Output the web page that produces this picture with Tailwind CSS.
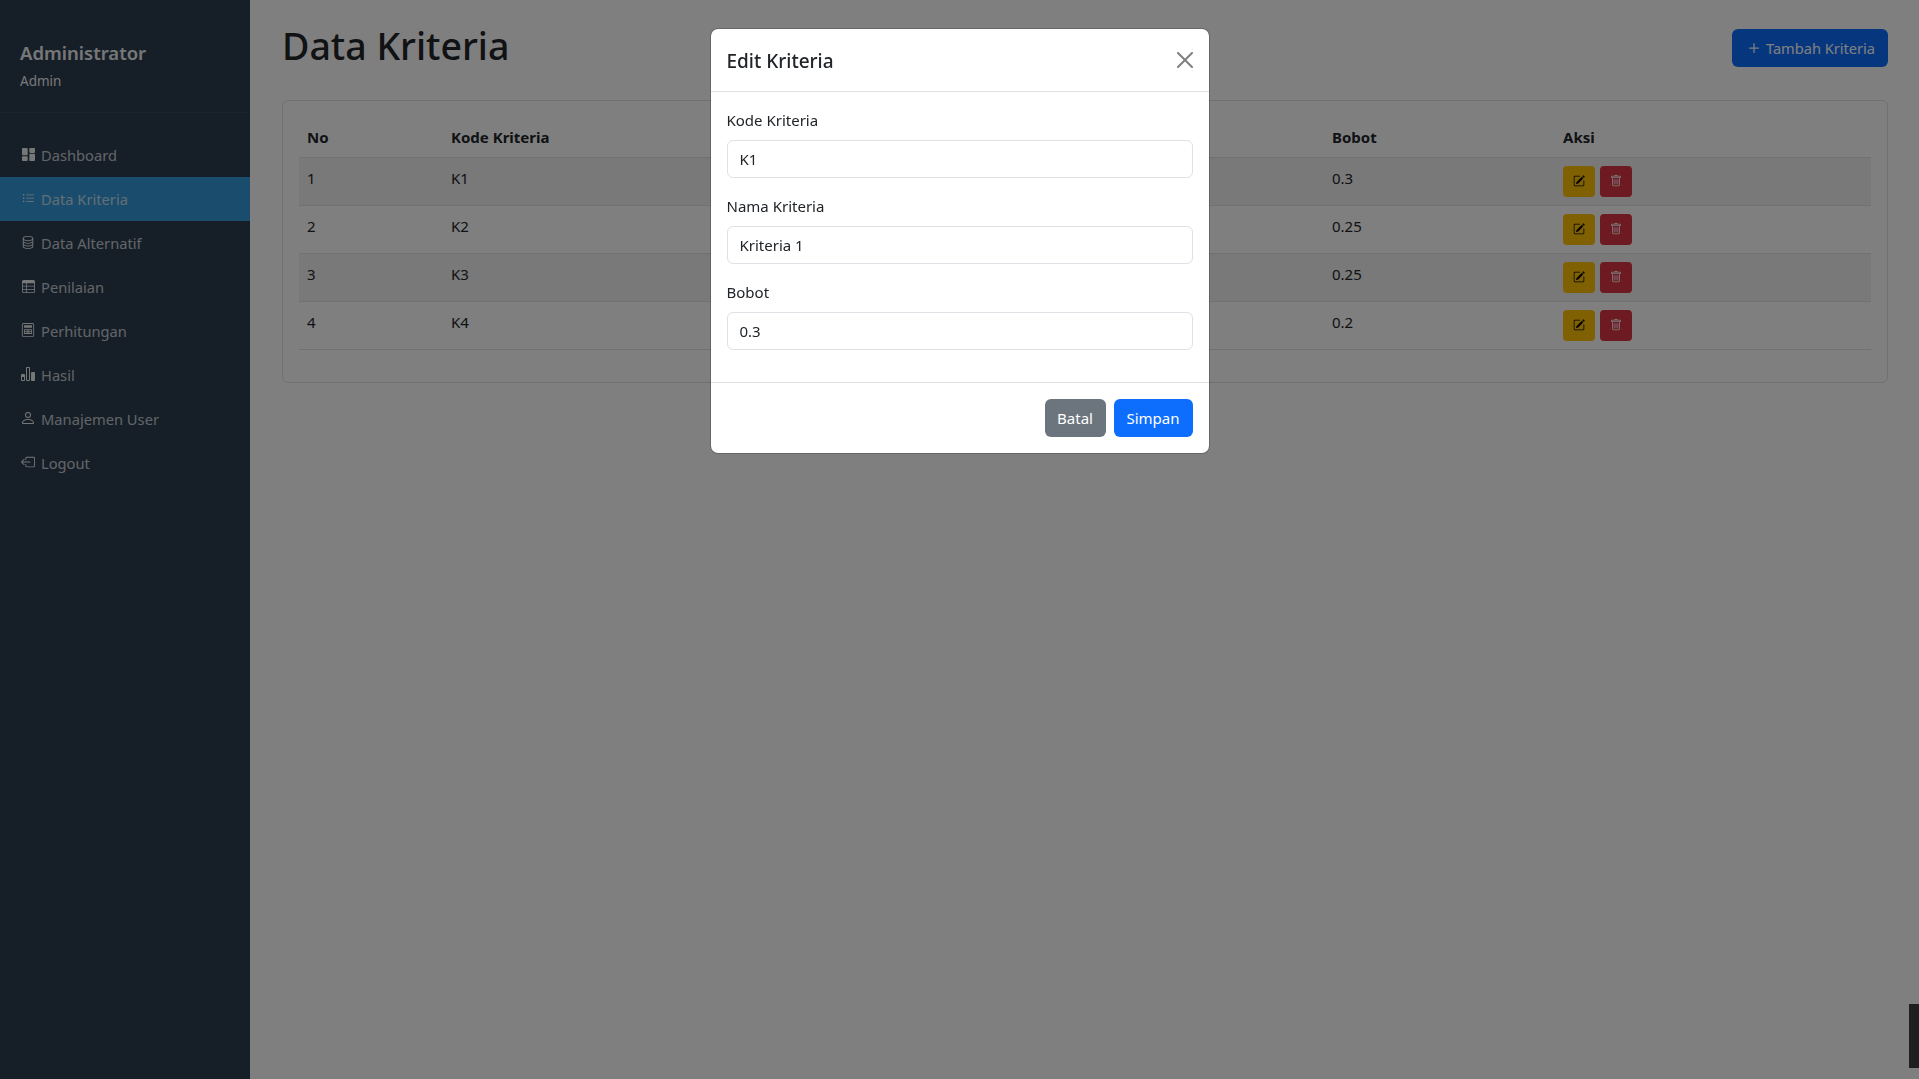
<!DOCTYPE html>
<html>
  <head>
    <title>Data Kriteria</title>
    <script src="https://cdn.jsdelivr.net/npm/@tailwindcss/browser@4"></script>
  </head>
  <body class="font-['Noto_Sans',sans-serif] text-[#212529] bg-white">
    <div class="flex h-screen overflow-hidden">
      <!-- sidebar -->
      <aside class="w-[250px] shrink-0 bg-[#2c3e50] text-[#ecf0f1]">
        <div class="pt-[41px] pl-[20px] border-b border-white/5 h-[113px]">
          <div class="text-[18.5px] leading-[24px] font-semibold">Administrator</div>
          <div class="text-[13.5px] leading-[21px] mt-[6px]">Admin</div>
        </div>
        <nav class="mt-[20px] text-[14.7px] text-[#ecf0f1]/80">
          <a class="flex items-center h-[44px] pl-[22px] gap-[6px]">
            <svg class="w-[13px] h-[13px] -mt-[2px] text-[#ecf0f1]" viewBox="0 0 16 16" fill="currentColor"><path d="M0 1a1 1 0 0 1 1-1h5a1 1 0 0 1 1 1v7a1 1 0 0 1-1 1H1a1 1 0 0 1-1-1V1zm9 0a1 1 0 0 1 1-1h5a1 1 0 0 1 1 1v4a1 1 0 0 1-1 1h-5a1 1 0 0 1-1-1V1zm0 7a1 1 0 0 1 1-1h5a1 1 0 0 1 1 1v7a1 1 0 0 1-1 1h-5a1 1 0 0 1-1-1V8zm-9 3a1 1 0 0 1 1-1h5a1 1 0 0 1 1 1v4a1 1 0 0 1-1 1H1a1 1 0 0 1-1-1v-4z"/></svg>
            Dashboard
          </a>
          <a class="flex items-center h-[44px] pl-[22px] gap-[6px] bg-[#3498db]">
            <svg class="w-[13px] h-[13px] -mt-[2px] text-[#ecf0f1]" viewBox="0 0 16 16" fill="currentColor"><path d="M5 11.5a.5.5 0 0 1 .5-.5h9a.5.5 0 0 1 0 1h-9a.5.5 0 0 1-.5-.5zm0-4a.5.5 0 0 1 .5-.5h9a.5.5 0 0 1 0 1h-9a.5.5 0 0 1-.5-.5zm0-4a.5.5 0 0 1 .5-.5h9a.5.5 0 0 1 0 1h-9a.5.5 0 0 1-.5-.5zm-3 1a1 1 0 1 0 0-2 1 1 0 0 0 0 2zm0 4a1 1 0 1 0 0-2 1 1 0 0 0 0 2zm0 4a1 1 0 1 0 0-2 1 1 0 0 0 0 2z"/></svg>
            Data Kriteria
          </a>
          <a class="flex items-center h-[44px] pl-[21px] gap-[6px]">
            <svg class="w-[14px] h-[14px] -mt-[2px] text-[#ecf0f1]" viewBox="0 0 16 16" fill="currentColor"><path d="M4.318 2.687C5.234 2.271 6.536 2 8 2s2.766.27 3.682.687C12.644 3.125 13 3.627 13 4c0 .374-.356.875-1.318 1.313C10.766 5.729 9.464 6 8 6s-2.766-.27-3.682-.687C3.356 4.875 3 4.373 3 4c0-.374.356-.875 1.318-1.313ZM13 5.698V7c0 .374-.356.875-1.318 1.313C10.766 8.729 9.464 9 8 9s-2.766-.27-3.682-.687C3.356 7.875 3 7.373 3 7V5.698c.271.202.58.378.904.525C4.978 6.711 6.427 7 8 7s3.022-.289 4.096-.777A4.92 4.92 0 0 0 13 5.698ZM14 4c0-1.007-.875-1.755-1.904-2.223C11.022 1.289 9.573 1 8 1s-3.022.289-4.096.777C2.875 2.245 2 2.993 2 4v9c0 1.007.875 1.755 1.904 2.223C4.978 15.71 6.427 16 8 16s3.022-.289 4.096-.777C13.125 14.755 14 14.007 14 13V4Zm-1 4.698V10c0 .374-.356.875-1.318 1.313C10.766 11.729 9.464 12 8 12s-2.766-.27-3.682-.687C3.356 10.875 3 10.373 3 10V8.698c.271.202.58.378.904.525C4.978 9.71 6.427 10 8 10s3.022-.289 4.096-.777A4.92 4.92 0 0 0 13 8.698Zm0 3V13c0 .374-.356.875-1.318 1.313C10.766 14.729 9.464 15 8 15s-2.766-.27-3.682-.687C3.356 13.875 3 13.373 3 13v-1.302c.271.202.58.378.904.525C4.978 12.71 6.427 13 8 13s3.022-.289 4.096-.777c.324-.147.633-.323.904-.525Z"/></svg>
            Data Alternatif
          </a>
          <a class="flex items-center h-[44px] pl-[22px] gap-[6px]">
            <svg class="w-[13px] h-[13px] -mt-[2px] text-[#ecf0f1]" viewBox="0 0 16 16" fill="currentColor"><path d="M0 2a2 2 0 0 1 2-2h12a2 2 0 0 1 2 2v12a2 2 0 0 1-2 2H2a2 2 0 0 1-2-2V2zm15 2h-9v3h9V4zm0 4h-9v3h9V8zm0 4h-9v3h8a1 1 0 0 0 1-1v-2zM5 15v-3H1v2a1 1 0 0 0 1 1h3zm-4-4h4V8H1v3zm0-4h4V4H1v3z"/></svg>
            Penilaian
          </a>
          <a class="flex items-center h-[44px] pl-[21px] gap-[6px]">
            <svg class="w-[14px] h-[14px] -mt-[2px] text-[#ecf0f1]" viewBox="0 0 16 16" fill="currentColor"><path d="M1 2a2 2 0 0 1 2-2h10a2 2 0 0 1 2 2v12a2 2 0 0 1-2 2H3a2 2 0 0 1-2-2V2zm2-1a1 1 0 0 0-1 1v12a1 1 0 0 0 1 1h10a1 1 0 0 0 1-1V2a1 1 0 0 0-1-1H3z"/><path d="M3.5 2.5h9v3h-9zM3.5 7h9v5.5h-9V7zm1 1v1h2V8h-2zm3 0v1h1V8h-1zm2 0v1h2V8h-2zm-5 2v1.500h2V10h-2zm3 0v1.500h1V10h-1zm2 0v1.500h2V10h-2z" fill-rule="evenodd"/></svg>
            Perhitungan
          </a>
          <a class="flex items-center h-[44px] pl-[20px] gap-[5px]">
            <svg class="w-[16px] h-[16px] -mt-[2px] text-[#ecf0f1]" viewBox="0 0 16 16" fill="currentColor"><path d="M4 11H2v3h2v-3zm5-9H7v12h2V2zm5 5h-2v7h2V7zM12 6a1 1 0 0 0-1 1v7a1 1 0 0 0 1 1h2a1 1 0 0 0 1-1V7a1 1 0 0 0-1-1h-2zM6 2a1 1 0 0 1 1-1h2a1 1 0 0 1 1 1v12a1 1 0 0 1-1 1H7a1 1 0 0 1-1-1V2zm-5 7a1 1 0 0 1 1-1h2a1 1 0 0 1 1 1v5a1 1 0 0 1-1 1H2a1 1 0 0 1-1-1V9z"/></svg>
            Hasil
          </a>
          <a class="flex items-center h-[44px] pl-[20px] gap-[5px]">
            <svg class="w-[16px] h-[16px] -mt-[2px] text-[#ecf0f1]" viewBox="0 0 16 16" fill="currentColor"><path d="M8 8a3 3 0 1 0 0-6 3 3 0 0 0 0 6zm2-3a2 2 0 1 1-4 0 2 2 0 0 1 4 0zm4 8c0 1-1 1-1 1H3s-1 0-1-1 1-4 6-4 6 3 6 4zm-1-.004c-.001-.246-.154-.986-.832-1.664C11.516 10.68 10.289 10 8 10c-2.29 0-3.516.68-4.168 1.332-.678.678-.83 1.418-.832 1.664h10z"/></svg>
            Manajemen User
          </a>
          <a class="flex items-center h-[44px] pl-[21px] gap-[6px]">
            <svg class="w-[14px] h-[14px] -mt-[2px] text-[#ecf0f1]" viewBox="0 0 16 16" fill="currentColor"><path d="M6 12.5a.5.5 0 0 0 .5.5h8a.5.5 0 0 0 .5-.5v-9a.5.5 0 0 0-.5-.5h-8a.5.5 0 0 0-.5.5v2a.5.5 0 0 1-1 0v-2A1.5 1.5 0 0 1 6.5 2h8A1.5 1.5 0 0 1 16 3.5v9a1.5 1.5 0 0 1-1.5 1.5h-8A1.5 1.5 0 0 1 5 12.5v-2a.5.5 0 0 1 1 0v2z"/><path d="M.146 8.354a.5.5 0 0 1 0-.708l3-3a.5.5 0 1 1 .708.708L1.707 7.5H10.5a.5.5 0 0 1 0 1H1.707l2.147 2.146a.5.5 0 0 1-.708.708l-3-3z"/></svg>
            Logout
          </a>
        </nav>
      </aside>

      <!-- content -->
      <main class="flex-1 pt-[24px] pl-[32px] pr-[31px]">
        <div class="flex items-center justify-between h-[48px] mb-[28px]">
          <h1 class="text-[37.5px] font-medium leading-[46px] -mt-[4px]">Data Kriteria</h1>
          <button class="flex items-center gap-[2px] h-[38px] pl-[12px] pr-[13px] pt-[1px] bg-[#0d6efd] text-white text-[14.6px] rounded-[6px]">
            <svg class="w-[20px] h-[20px] -mt-[2px]" viewBox="0 0 16 16" fill="currentColor"><path d="M8 4a.5.5 0 0 1 .5.5v3h3a.5.5 0 0 1 0 1h-3v3a.5.5 0 0 1-1 0v-3h-3a.5.5 0 0 1 0-1h3v-3A.5.5 0 0 1 8 4z"/></svg>
            Tambah Kriteria
          </button>
        </div>

        <div class="border border-[#dee2e6] rounded-[6px] p-[16px] h-[283px]">
          <table class="w-full table-fixed text-[15px] border-collapse">
            <thead>
              <tr class="h-[40px] border-b border-[#dee2e6] text-left">
                <th class="w-[144px] px-[8px] font-bold">No</th>
                <th class="w-[320px] px-[8px] font-bold">Kode Kriteria</th>
                <th class="w-[561px] px-[8px] font-bold">Nama Kriteria</th>
                <th class="w-[231px] px-[8px] font-bold">Bobot</th>
                <th class="px-[8px] font-bold">Aksi</th>
              </tr>
            </thead>
            <tbody>
              <tr class="h-[48px] border-b border-[#dee2e6] bg-[#f2f2f2]">
                <td class="px-[8px] align-top pt-[9px]">1</td>
                <td class="px-[8px] align-top pt-[9px]">K1</td>
                <td class="px-[8px] align-top pt-[9px]">Kriteria 1</td>
                <td class="px-[8px] align-top pt-[9px]">0.3</td>
                <td class="px-[8px] align-top pt-[8px]">
                  <div class="flex gap-[5px]">
                    <button class="flex items-center justify-center w-[32px] h-[31px] rounded-[4px] bg-[#ffc107] text-black"><svg class="w-[12px] h-[12px]" viewBox="0 0 16 16" fill="currentColor"><path d="M15.502 1.94a.5.5 0 0 1 0 .706L14.459 3.69l-2-2L13.502.646a.5.5 0 0 1 .707 0l1.293 1.293zm-1.75 2.456-2-2L4.939 9.21a.5.5 0 0 0-.121.196l-.805 2.414a.25.25 0 0 0 .316.316l2.414-.805a.5.5 0 0 0 .196-.12l6.813-6.814z"/><path d="M1 13.5A1.5 1.5 0 0 0 2.5 15h11a1.5 1.5 0 0 0 1.5-1.5v-6a.5.5 0 0 0-1 0v6a.5.5 0 0 1-.5.5h-11a.5.5 0 0 1-.5-.5v-11a.5.5 0 0 1 .5-.5H9a.5.5 0 0 0 0-1H2.5A1.5 1.5 0 0 0 1 2.5v11z"/></svg></button>
                    <button class="flex items-center justify-center w-[32px] h-[31px] rounded-[4px] bg-[#dc3545] text-white"><svg class="w-[12px] h-[12px]" viewBox="0 0 16 16" fill="currentColor"><path d="M5.5 5.5A.5.5 0 0 1 6 6v6a.5.5 0 0 1-1 0V6a.5.5 0 0 1 .5-.5zm2.5 0a.5.5 0 0 1 .5.5v6a.5.5 0 0 1-1 0V6a.5.5 0 0 1 .5-.5zm3 .5a.5.5 0 0 0-1 0v6a.5.5 0 0 0 1 0V6z"/><path d="M14.5 3a1 1 0 0 1-1 1H13v9a2 2 0 0 1-2 2H5a2 2 0 0 1-2-2V4h-.5a1 1 0 0 1-1-1V2a1 1 0 0 1 1-1H6a1 1 0 0 1 1-1h2a1 1 0 0 1 1 1h3.5a1 1 0 0 1 1 1v1zM4.118 4 4 4.059V13a1 1 0 0 0 1 1h6a1 1 0 0 0 1-1V4.059L11.882 4H4.118zM2.5 3h11V2h-11v1z"/></svg></button>
                  </div>
                </td>
              </tr>
              <tr class="h-[48px] border-b border-[#dee2e6]">
                <td class="px-[8px] align-top pt-[9px]">2</td>
                <td class="px-[8px] align-top pt-[9px]">K2</td>
                <td class="px-[8px] align-top pt-[9px]">Kriteria 2</td>
                <td class="px-[8px] align-top pt-[9px]">0.25</td>
                <td class="px-[8px] align-top pt-[8px]">
                  <div class="flex gap-[5px]">
                    <button class="flex items-center justify-center w-[32px] h-[31px] rounded-[4px] bg-[#ffc107] text-black"><svg class="w-[12px] h-[12px]" viewBox="0 0 16 16" fill="currentColor"><path d="M15.502 1.94a.5.5 0 0 1 0 .706L14.459 3.69l-2-2L13.502.646a.5.5 0 0 1 .707 0l1.293 1.293zm-1.75 2.456-2-2L4.939 9.21a.5.5 0 0 0-.121.196l-.805 2.414a.25.25 0 0 0 .316.316l2.414-.805a.5.5 0 0 0 .196-.12l6.813-6.814z"/><path d="M1 13.5A1.5 1.5 0 0 0 2.5 15h11a1.5 1.5 0 0 0 1.5-1.5v-6a.5.5 0 0 0-1 0v6a.5.5 0 0 1-.5.5h-11a.5.5 0 0 1-.5-.5v-11a.5.5 0 0 1 .5-.5H9a.5.5 0 0 0 0-1H2.5A1.5 1.5 0 0 0 1 2.5v11z"/></svg></button>
                    <button class="flex items-center justify-center w-[32px] h-[31px] rounded-[4px] bg-[#dc3545] text-white"><svg class="w-[12px] h-[12px]" viewBox="0 0 16 16" fill="currentColor"><path d="M5.5 5.5A.5.5 0 0 1 6 6v6a.5.5 0 0 1-1 0V6a.5.5 0 0 1 .5-.5zm2.5 0a.5.5 0 0 1 .5.5v6a.5.5 0 0 1-1 0V6a.5.5 0 0 1 .5-.5zm3 .5a.5.5 0 0 0-1 0v6a.5.5 0 0 0 1 0V6z"/><path d="M14.5 3a1 1 0 0 1-1 1H13v9a2 2 0 0 1-2 2H5a2 2 0 0 1-2-2V4h-.5a1 1 0 0 1-1-1V2a1 1 0 0 1 1-1H6a1 1 0 0 1 1-1h2a1 1 0 0 1 1 1h3.5a1 1 0 0 1 1 1v1zM4.118 4 4 4.059V13a1 1 0 0 0 1 1h6a1 1 0 0 0 1-1V4.059L11.882 4H4.118zM2.5 3h11V2h-11v1z"/></svg></button>
                  </div>
                </td>
              </tr>
              <tr class="h-[48px] border-b border-[#dee2e6] bg-[#f2f2f2]">
                <td class="px-[8px] align-top pt-[9px]">3</td>
                <td class="px-[8px] align-top pt-[9px]">K3</td>
                <td class="px-[8px] align-top pt-[9px]">Kriteria 3</td>
                <td class="px-[8px] align-top pt-[9px]">0.25</td>
                <td class="px-[8px] align-top pt-[8px]">
                  <div class="flex gap-[5px]">
                    <button class="flex items-center justify-center w-[32px] h-[31px] rounded-[4px] bg-[#ffc107] text-black"><svg class="w-[12px] h-[12px]" viewBox="0 0 16 16" fill="currentColor"><path d="M15.502 1.94a.5.5 0 0 1 0 .706L14.459 3.69l-2-2L13.502.646a.5.5 0 0 1 .707 0l1.293 1.293zm-1.75 2.456-2-2L4.939 9.21a.5.5 0 0 0-.121.196l-.805 2.414a.25.25 0 0 0 .316.316l2.414-.805a.5.5 0 0 0 .196-.12l6.813-6.814z"/><path d="M1 13.5A1.5 1.5 0 0 0 2.5 15h11a1.5 1.5 0 0 0 1.5-1.5v-6a.5.5 0 0 0-1 0v6a.5.5 0 0 1-.5.5h-11a.5.5 0 0 1-.5-.5v-11a.5.5 0 0 1 .5-.5H9a.5.5 0 0 0 0-1H2.5A1.5 1.5 0 0 0 1 2.5v11z"/></svg></button>
                    <button class="flex items-center justify-center w-[32px] h-[31px] rounded-[4px] bg-[#dc3545] text-white"><svg class="w-[12px] h-[12px]" viewBox="0 0 16 16" fill="currentColor"><path d="M5.5 5.5A.5.5 0 0 1 6 6v6a.5.5 0 0 1-1 0V6a.5.5 0 0 1 .5-.5zm2.5 0a.5.5 0 0 1 .5.5v6a.5.5 0 0 1-1 0V6a.5.5 0 0 1 .5-.5zm3 .5a.5.5 0 0 0-1 0v6a.5.5 0 0 0 1 0V6z"/><path d="M14.5 3a1 1 0 0 1-1 1H13v9a2 2 0 0 1-2 2H5a2 2 0 0 1-2-2V4h-.5a1 1 0 0 1-1-1V2a1 1 0 0 1 1-1H6a1 1 0 0 1 1-1h2a1 1 0 0 1 1 1h3.5a1 1 0 0 1 1 1v1zM4.118 4 4 4.059V13a1 1 0 0 0 1 1h6a1 1 0 0 0 1-1V4.059L11.882 4H4.118zM2.5 3h11V2h-11v1z"/></svg></button>
                  </div>
                </td>
              </tr>
              <tr class="h-[48px] border-b border-[#dee2e6]">
                <td class="px-[8px] align-top pt-[9px]">4</td>
                <td class="px-[8px] align-top pt-[9px]">K4</td>
                <td class="px-[8px] align-top pt-[9px]">Kriteria 4</td>
                <td class="px-[8px] align-top pt-[9px]">0.2</td>
                <td class="px-[8px] align-top pt-[8px]">
                  <div class="flex gap-[5px]">
                    <button class="flex items-center justify-center w-[32px] h-[31px] rounded-[4px] bg-[#ffc107] text-black"><svg class="w-[12px] h-[12px]" viewBox="0 0 16 16" fill="currentColor"><path d="M15.502 1.94a.5.5 0 0 1 0 .706L14.459 3.69l-2-2L13.502.646a.5.5 0 0 1 .707 0l1.293 1.293zm-1.75 2.456-2-2L4.939 9.21a.5.5 0 0 0-.121.196l-.805 2.414a.25.25 0 0 0 .316.316l2.414-.805a.5.5 0 0 0 .196-.12l6.813-6.814z"/><path d="M1 13.5A1.5 1.5 0 0 0 2.5 15h11a1.5 1.5 0 0 0 1.5-1.5v-6a.5.5 0 0 0-1 0v6a.5.5 0 0 1-.5.5h-11a.5.5 0 0 1-.5-.5v-11a.5.5 0 0 1 .5-.5H9a.5.5 0 0 0 0-1H2.5A1.5 1.5 0 0 0 1 2.5v11z"/></svg></button>
                    <button class="flex items-center justify-center w-[32px] h-[31px] rounded-[4px] bg-[#dc3545] text-white"><svg class="w-[12px] h-[12px]" viewBox="0 0 16 16" fill="currentColor"><path d="M5.5 5.5A.5.5 0 0 1 6 6v6a.5.5 0 0 1-1 0V6a.5.5 0 0 1 .5-.5zm2.5 0a.5.5 0 0 1 .5.5v6a.5.5 0 0 1-1 0V6a.5.5 0 0 1 .5-.5zm3 .5a.5.5 0 0 0-1 0v6a.5.5 0 0 0 1 0V6z"/><path d="M14.5 3a1 1 0 0 1-1 1H13v9a2 2 0 0 1-2 2H5a2 2 0 0 1-2-2V4h-.5a1 1 0 0 1-1-1V2a1 1 0 0 1 1-1H6a1 1 0 0 1 1-1h2a1 1 0 0 1 1 1h3.5a1 1 0 0 1 1 1v1zM4.118 4 4 4.059V13a1 1 0 0 0 1 1h6a1 1 0 0 0 1-1V4.059L11.882 4H4.118zM2.5 3h11V2h-11v1z"/></svg></button>
                  </div>
                </td>
              </tr>
            </tbody>
          </table>
        </div>
      </main>
    </div>

    <!-- backdrop + modal -->
    <div class="fixed inset-0 bg-black/50"></div>
    <div class="fixed inset-0 flex justify-center items-start pt-[28px]">
      <div class="w-[500px] bg-white bg-clip-padding border border-black/20 rounded-[8px]">
        <div class="flex items-center justify-between h-[63px] px-[16px] border-b border-[#dee2e6]">
          <h5 class="text-[19px] font-medium pt-[2px]">Edit Kriteria</h5>
          <svg class="w-[16px] h-[16px] text-black/50" viewBox="0 0 16 16" fill="currentColor"><path d="M.293.293a1 1 0 0 1 1.414 0L8 6.586 14.293.293a1 1 0 1 1 1.414 1.414L9.414 8l6.293 6.293a1 1 0 0 1-1.414 1.414L8 9.414l-6.293 6.293a1 1 0 0 1-1.414-1.414L6.586 8 .293 1.707a1 1 0 0 1 0-1.414z"/></svg>
        </div>
        <form class="p-[16px] text-[15px]">
          <div class="mb-[16px]">
            <label class="block mb-[8px] leading-[24px]">Kode Kriteria</label>
            <input class="block w-full h-[38px] px-[12px] border border-[#dee2e6] rounded-[6px]" value="K1">
          </div>
          <div class="mb-[16px]">
            <label class="block mb-[8px] leading-[24px]">Nama Kriteria</label>
            <input class="block w-full h-[38px] px-[12px] border border-[#dee2e6] rounded-[6px]" value="Kriteria 1">
          </div>
          <div class="mb-[16px]">
            <label class="block mb-[8px] leading-[24px]">Bobot</label>
            <input class="block w-full h-[38px] px-[12px] border border-[#dee2e6] rounded-[6px]" value="0.3">
          </div>
        </form>
        <div class="flex justify-end gap-[8px] p-[16px] border-t border-[#dee2e6] text-[15px] text-white">
          <button class="w-[61px] h-[38px] rounded-[6px] bg-[#6c757d]">Batal</button>
          <button class="w-[79px] h-[38px] rounded-[6px] bg-[#0d6efd]">Simpan</button>
        </div>
      </div>
    </div>

    <!-- dark strip at the bottom right edge -->
    <div class="fixed right-0 top-[1004px] w-[10px] h-[64px] bg-[#1f1f1f]"></div>
  </body>
</html>
